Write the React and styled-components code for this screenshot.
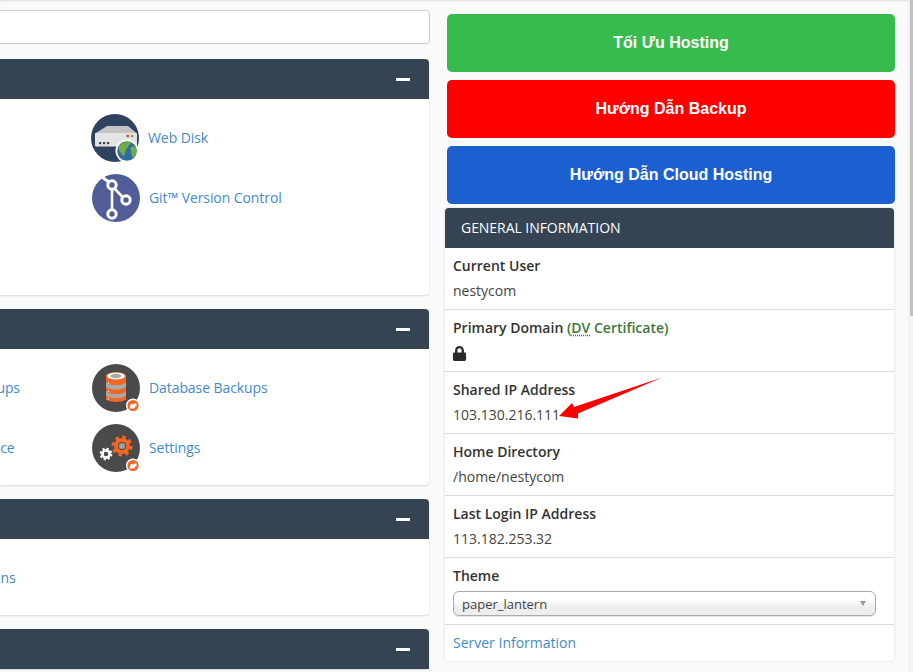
import React from "react";
import styled, { createGlobalStyle } from "styled-components";
import { FaLock } from "react-icons/fa";

const Global = createGlobalStyle`
html, body {
  margin: 0;
  padding: 0;
  height: 100%;
  overflow: hidden;
  background: #fafafa;
}
* { box-sizing: border-box; }
`;

const Page = styled.div`
display: flex;
width: 913px;
height: 672px;
overflow: hidden;
font-family: "Open Sans", sans-serif;
font-size: 14px;
color: #333;
background: #fafafa;
box-shadow: inset 0 2px 2px -1px rgba(0,0,0,.12);
`;

const Content = styled.div`
display: flex;
width: 908px;
flex: none;
`;

/* the page is scrolled sideways in the shot, so the left part is cut */
const LeftColumn = styled.div`
width: 430px;
flex: none;
margin-right: 15px;
overflow: hidden;
`;

const LeftInner = styled.div`
width: 600px;
margin-left: -170px;
padding-top: 10px;
`;

const SearchBox = styled.input`
display: block;
width: 100%;
height: 34px;
margin-bottom: 15px;
background: #fff;
border: 1px solid #ccc;
border-radius: 4px;
outline: none;
`;

const Panel = styled.section`
width: 599px;
margin-bottom: 14px;
background: #fff;
border-radius: 4px;
box-shadow: 0 1px 2px rgba(0,0,0,.14);
`;

const PanelHead = styled.div`
display: flex;
align-items: center;
justify-content: flex-end;
height: 40px;
padding-right: 19px;
background: #344453;
border-radius: 4px 4px 0 0;
`;

const Collapse = styled.span`
display: block;
width: 14px;
height: 3px;
background: #fff;
`;

const Items = styled.div`
display: grid;
grid-template-columns: 251px 251px;
grid-template-rows: repeat(${(p) => p.$rows}, 60px);
padding: 15px 0 1px 11px;
`;

const Item = styled.a`
display: flex;
align-items: flex-start;
gap: 9px;
height: 48px;
line-height: 48px;
color: #428bca;
letter-spacing: -0.08px;
white-space: nowrap;
margin-left: ${(p) => p.$nudge || 0}px;
`;

const IconWrap = styled.svg`
display: block;
width: 48px;
height: 48px;
flex: none;
`;

const PlainIcon = styled.span`
display: block;
width: 48px;
height: 48px;
flex: none;
border-radius: 50%;
background: #4a4a4a;
`;

const Sidebar = styled.div`
width: 450px;
flex: none;
padding-top: 14px;
`;

const Banner = styled.a`
display: flex;
align-items: center;
justify-content: center;
width: 448px;
height: 58px;
margin: 0 0 8px 2px;
background: ${(p) => p.$bg};
border-radius: 5px;
color: #fff;
font-family: "Liberation Sans", Arial, sans-serif;
font-size: 16px;
font-weight: 700;
`;

const InfoPanel = styled.section`
position: relative;
width: 449px;
margin-top: -4px;
background: #fff;
border-radius: 4px;
box-shadow: 0 0 2px rgba(0,0,0,.2);
`;

const InfoHead = styled.div`
height: 40px;
padding: 0 16px;
line-height: 40px;
background: #344453;
border-radius: 4px 4px 0 0;
color: #fff;
letter-spacing: -0.05px;
text-transform: uppercase;
`;

const Row = styled.div`
padding: 8px;
border-bottom: ${(p) => (p.$last ? "none" : "1px solid #ddd")};
`;

const Label = styled.div`
height: 20px;
line-height: 20px;
font-weight: 580;
color: #333;
`;

const Value = styled.div`
height: 20px;
margin-top: 5px;
line-height: 20px;
color: #444;
`;

const Cert = styled.span`
color: #3c763d;
`;

const Abbr = styled.abbr`
text-decoration: underline dotted #3c763d;
text-underline-offset: 2px;
`;

const LockLine = styled.div`
display: flex;
align-items: center;
height: 20px;
margin: 5px 0 0 -1px;
font-size: 15px;
color: #2b2b2b;
`;

const ThemeSelect = styled.div`
position: relative;
width: 423px;
height: 25px;
margin-top: 5px;
padding-left: 8px;
line-height: 24px;
font-size: 13px;
color: #444;
background: linear-gradient(#fff 30%, #eee 65%);
border: 1px solid #aaa;
border-radius: 6px;
box-shadow: 0 1px 1px rgba(0,0,0,.12);
`;

const Caret = styled.span`
position: absolute;
top: 9px;
right: 9px;
width: 0;
height: 0;
border-left: 3.5px solid transparent;
border-right: 3.5px solid transparent;
border-top: 5px solid #999;
`;

const ServerLink = styled.a`
display: block;
height: 20px;
line-height: 20px;
color: #428bca;
`;

const Arrow = styled.svg`
position: absolute;
left: 110px;
top: 165px;
width: 112px;
height: 50px;
pointer-events: none;
`;

const ScrollTrack = styled.div`
width: 5px;
flex: none;
padding-left: 2px;
background: #f3f3f3;
`;

const ScrollThumb = styled.div`
height: 316px;
background: #c1c1c1;
`;

const Badge = ({ cx = 41, cy = 41.5 }) => (
  <g>
    <circle cx={cx} cy={cy} r="7" fill="#fff" />
    <circle cx={cx} cy={cy} r="5.6" fill="#f26522" />
    <path d={`M${cx - 3.5} ${cy + 3} l1.2 -4.6 h2.2 l1 1.2 v-1.6 h2.6 v3 h-1.4 l-.6 2 z`} fill="#fff" />
  </g>
);

const WebDiskIcon = () => (
  <IconWrap viewBox="0 0 48 48">
    <circle cx="24" cy="24" r="24" fill="#2f4260" />
    <path d="M4 19.5 L16 12 H37 L46 19.5 Z" fill="#c4c4c4" />
    <rect x="4" y="19" width="42" height="13.5" rx="1" fill="#e4e4e4" />
    <rect x="35.5" y="20.8" width="2.4" height="2.4" fill="#d9472b" />
    <rect x="40" y="20.8" width="2.4" height="2.4" fill="#6cb33f" />
    <rect x="8" y="28" width="2.2" height="2.2" fill="#444" />
    <rect x="12" y="28" width="2.2" height="2.2" fill="#444" />
    <rect x="16" y="28" width="2.2" height="2.2" fill="#444" />
    <circle cx="36" cy="37" r="11.5" fill="#fff" />
    <circle cx="36" cy="37" r="9.8" fill="#2f6f9f" />
    <path d="M28 32 C31 28 37 27 40 28 C39 31 37 31 37 34 C34 34 35 38 33 42 C30 40 27 36 28 32 Z" fill="#74ac45" />
    <path d="M39 34 C42 32 44 32 45.6 35 C46 39 44 43 42 44 C40 42 41 38 39 34 Z" fill="#74ac45" />
  </IconWrap>
);

const GitIcon = () => (
  <IconWrap viewBox="0 0 48 48">
    <circle cx="24" cy="24" r="24" fill="#515d96" />
    <g fill="none" stroke="#fff" strokeWidth="3">
      <path d="M10 3 L17.5 8.5" />
      <path d="M20 15 V36" strokeWidth="2.6" />
      <path d="M23 15 L31 23.5" strokeWidth="2.6" />
      <circle cx="20" cy="11" r="4.2" />
      <circle cx="34" cy="26" r="4.2" />
      <circle cx="20" cy="40" r="4.2" />
    </g>
  </IconWrap>
);

const DbBackupIcon = () => (
  <IconWrap viewBox="0 0 48 48">
    <circle cx="24" cy="24" r="24" fill="#4a4a4a" />
    <rect x="14" y="13" width="20" height="23" fill="#a9a9a9" />
    <path d="M14 12 C14 7 34 7 34 12 V18 C34 22 14 22 14 18 Z" fill="#f26522" />
    <path d="M14 23 C18 26.5 30 26.5 34 23 V27 C34 31 14 31 14 27 Z" fill="#f26522" />
    <path d="M14 31.5 C18 35 30 35 34 31.5 V34.5 C34 39 14 39 14 34.5 Z" fill="#f26522" />
    <ellipse cx="24" cy="12" rx="9" ry="3.6" fill="#f5f5f5" />
    <ellipse cx="24" cy="12" rx="5.5" ry="2.2" fill="#a9a9a9" />
    <circle cx="16.5" cy="19" r=".7" fill="#fff" />
    <circle cx="16.5" cy="27.5" r=".7" fill="#fff" />
    <circle cx="16.5" cy="35" r=".7" fill="#fff" />
    <Badge />
  </IconWrap>
);

const SettingsIcon = () => (
  <IconWrap viewBox="0 0 48 48">
    <circle cx="24" cy="24" r="24" fill="#4a4a4a" />
    <circle cx="30" cy="22" r="6" fill="none" stroke="#f26522" strokeWidth="4" />
    <circle cx="30" cy="22" r="9" fill="none" stroke="#f26522" strokeWidth="3" strokeDasharray="3.5 3.57" />
    <circle cx="30" cy="22" r="3" fill="#a0a0a0" />
    <circle cx="14" cy="30" r="3.6" fill="none" stroke="#fff" strokeWidth="2.6" />
    <circle cx="14" cy="30" r="5.4" fill="none" stroke="#fff" strokeWidth="2" strokeDasharray="2.12 2.12" />
    <Badge />
  </IconWrap>
);

export default function App() {
  return (
    <Page>
      <Global />
      <Content>
        <LeftColumn>
          <LeftInner>
            <SearchBox />
            <Panel>
              <PanelHead><Collapse /></PanelHead>
              <Items $rows={3}>
                <span />
                <Item $nudge={-1}><WebDiskIcon />Web Disk</Item>
                <span />
                <Item><GitIcon />Git™ Version Control</Item>
              </Items>
            </Panel>
            <Panel>
              <PanelHead><Collapse /></PanelHead>
              <Items $rows={2}>
                <Item><PlainIcon />DNS Zone Backups</Item>
                <Item><DbBackupIcon />Database Backups</Item>
                <Item><PlainIcon />GDPR Compliance</Item>
                <Item><SettingsIcon />Settings</Item>
              </Items>
            </Panel>
            <Panel>
              <PanelHead><Collapse /></PanelHead>
              <Items $rows={1}>
                <Item><PlainIcon />Email Applications</Item>
              </Items>
            </Panel>
            <Panel>
              <PanelHead><Collapse /></PanelHead>
            </Panel>
          </LeftInner>
        </LeftColumn>
        <Sidebar>
          <Banner $bg="#38bb4d">Tối Ưu Hosting</Banner>
          <Banner $bg="#ff0000">Hướng Dẫn Backup</Banner>
          <Banner $bg="#1c5fd1">Hướng Dẫn Cloud Hosting</Banner>
          <InfoPanel>
            <InfoHead>General Information</InfoHead>
            <Row>
              <Label>Current User</Label>
              <Value>nestycom</Value>
            </Row>
            <Row>
              <Label>Primary Domain <Cert>(<Abbr>DV</Abbr> Certificate)</Cert></Label>
              <LockLine><FaLock /></LockLine>
            </Row>
            <Row>
              <Label>Shared IP Address</Label>
              <Value>103.130.216.111</Value>
            </Row>
            <Row>
              <Label>Home Directory</Label>
              <Value>/home/nestycom</Value>
            </Row>
            <Row>
              <Label>Last Login IP Address</Label>
              <Value>113.182.253.32</Value>
            </Row>
            <Row>
              <Label>Theme</Label>
              <ThemeSelect>paper_lantern<Caret /></ThemeSelect>
            </Row>
            <Row $last>
              <ServerLink>Server Information</ServerLink>
            </Row>
            <Arrow viewBox="0 0 112 50">
              <path d="M107 4.5 L19 34 L17 30 L4 43 L23 45.5 L23 40.5 Z" fill="#f00" />
            </Arrow>
          </InfoPanel>
        </Sidebar>
      </Content>
      <ScrollTrack><ScrollThumb /></ScrollTrack>
    </Page>
  );
}
